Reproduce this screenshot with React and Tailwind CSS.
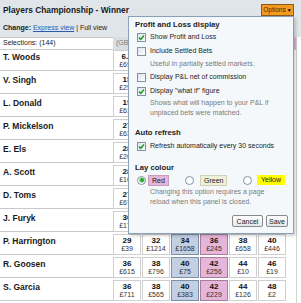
const runners = [
  { name: "T. Woods", cells: [["6.8", "£694"]] },
  { name: "V. Singh", cells: [["15", "£256"]] },
  { name: "L. Donald", cells: [["19", "£612"]] },
  { name: "P. Mickelson", cells: [["27", "£631"]] },
  { name: "E. Els", cells: [["28", "£204"]] },
  { name: "A. Scott", cells: [["28", "£160"]] },
  { name: "D. Toms", cells: [["27", "£672"]] },
  { name: "J. Furyk", cells: [["30", "£175"]] },
  { name: "P. Harrington", cells: [["29", "£39"], ["32", "£1214"], ["34", "£1658"], ["36", "£245"], ["38", "£658"], ["40", "£446"]] },
  { name: "R. Goosen", cells: [["36", "£615"], ["38", "£796"], ["40", "£75"], ["42", "£256"], ["44", "£10"], ["46", "£19"]] },
  { name: "S. Garcia", cells: [["36", "£711"], ["38", "£565"], ["40", "£383"], ["42", "£229"], ["44", "£126"], ["48", "£2"]] },
];

function Check({ on }) {
  return (
    <span className="flex h-[9px] w-[9px] shrink-0 items-center justify-center border border-[#7f93a8] bg-linear-to-br from-[#dfe4e9] to-white">
      {on && (
        <svg width="7" height="7" viewBox="0 0 7 7">
          <path d="M1 3.6 L2.8 5.3 L6 1.6" stroke="#1f9a1f" strokeWidth="1.5" fill="none" />
        </svg>
      )}
    </span>
  );
}

function Radio({ on }) {
  return (
    <span className="flex h-[9px] w-[9px] shrink-0 items-center justify-center rounded-full border border-[#7f93a8] bg-white">
      {on && <span className="h-[4px] w-[4px] rounded-full bg-[#2aa52a] ring-1 ring-[#a8dca8]" />}
    </span>
  );
}

function CheckRow({ on, children }) {
  return (
    <div className="flex h-[14px] items-center gap-[4px] pl-[2px]">
      <Check on={on} />
      <span>{children}</span>
    </div>
  );
}

function Cell({ price, amount, kind }) {
  const tone =
    kind === "back"
      ? "bg-[#c3cfe2] border-[#7e8fa8]"
      : kind === "lay"
      ? "bg-[#e6b5da] border-[#a77f9c]"
      : "bg-white border-[#cfcfcf]";
  return (
    <div className={`flex h-[21px] w-[28px] flex-col items-center border pt-[1px] ${tone}`}>
      <span className="text-[8px] font-bold leading-[9px] text-[#111]">{price}</span>
      <span className="text-[7px] leading-[8px] text-[#333]">{amount}</span>
    </div>
  );
}

export default function App() {
  return (
    <div className="relative h-[303px] w-[301px] overflow-hidden bg-white font-['Liberation_Sans',Arial,sans-serif] text-[#1a1a1a]">
      <div className="bg-[#e0e5e9]">
        <div className="flex h-[20px] items-center justify-between pl-[3px] pr-[7px]">
          <h1 className="text-[8.4px] font-bold leading-none">Players Championship - Winner</h1>
          <button className="flex h-[12px] w-[33px] items-center justify-center gap-[1px] border border-[#8a5a1a] bg-[#f29a22] text-[6.5px] leading-none text-[#4a2a00]">
            Options <span className="text-[5px] text-black">▼</span>
          </button>
        </div>
        <div className="flex h-[17px] items-center pl-[3px] text-[7px]">
          <b>Change:</b>&nbsp;<a className="text-[#2a5db0] underline">Express view</a>&nbsp;| Full view
        </div>
      </div>

      <div className="w-[297px] border-r border-[#d4d4d4]">
        <div className="flex h-[13px]">
          <div className="flex w-[113px] items-center border-y border-[#c4c9cd] bg-white pl-[3px] text-[7px]">
            Selections: (144)
          </div>
          <div className="flex flex-1 items-center justify-between bg-[#d9dee2] pl-[3px] text-[7px] text-[#7a8088]">
            <span>(GBP)</span>
            <span className="h-full w-[4px] bg-[#e2b6d6]" />
          </div>
        </div>

        {runners.map((r) => (
          <div key={r.name} className="flex h-[23px]">
            <div className="h-[21px] w-[113px] border-b border-[#c8c8c8] pl-[3px] pt-[2px] text-[8.5px] font-bold leading-[10px]">
              {r.name}
            </div>
            <div className="flex gap-[1px]">
              {[0, 1, 2, 3, 4, 5].map((i) => {
                const c = r.cells[i];
                return (
                  <Cell
                    key={i}
                    price={c ? c[0] : ""}
                    amount={c ? c[1] : ""}
                    kind={i === 2 ? "back" : i === 3 ? "lay" : "plain"}
                  />
                );
              })}
            </div>
          </div>
        ))}
      </div>

      <div className="absolute left-[128px] top-[16px] flex h-[218px] w-[166px] flex-col border border-[#8a9fb8] bg-[#f5f8fb] pl-[6px] pr-[5px] pt-[3px] text-[7px] leading-[10px] text-[#222] shadow-[2px_2px_3px_rgba(0,0,0,0.18)]">
        <div className="h-[10px] text-[7.7px] font-bold">Profit and Loss display</div>
        <CheckRow on>Show Profit and Loss</CheckRow>
        <CheckRow>Include Settled Bets</CheckRow>
        <div className="flex h-[12px] items-center pl-[15px] text-[#7a7a7a]">Useful in partially settled markets.</div>
        <CheckRow>Display P&amp;L net of commission</CheckRow>
        <CheckRow on>Display "what if" figure</CheckRow>
        <div className="pl-[15px] text-[#7a7a7a]">
          Shows what will happen to your P&amp;L if
          <br />
          unplaced bets were matched.
        </div>

        <div className="mt-[10px] h-[10px] text-[7.7px] font-bold">Auto refresh</div>
        <div className="mt-[1px]">
          <CheckRow on>Refresh automatically every 30 seconds</CheckRow>
        </div>

        <div className="mt-[10px] h-[10px] text-[7.7px] font-bold">Lay colour</div>
        <div className="mt-[1px] flex h-[12px] items-center pl-[2px]">
          <div className="flex w-[48px] items-center gap-[2px]">
            <Radio on />
            <span className="border border-[#c99bbd] bg-[#e6b5da] px-[3px] leading-[9px]">Red</span>
          </div>
          <div className="flex w-[58px] items-center gap-[6px]">
            <Radio />
            <span className="border border-[#cfd0b8] bg-[#eef0d8] px-[3px] leading-[9px]">Green</span>
          </div>
          <div className="flex items-center gap-[5px]">
            <Radio />
            <span className="bg-[#ffff00] px-[4px] leading-[10px]">Yellow</span>
          </div>
        </div>
        <div className="mt-[1px] pl-[15px] text-[#7a7a7a]">
          Changing this option requires a page
          <br />
          reload when this panel is closed.
        </div>
        <div className="mt-[8px] flex justify-end gap-[3px]">
          <button className="h-[12px] w-[31px] rounded-[2px] border border-[#8a8a8a] bg-linear-to-b from-white to-[#e6e6e6] text-[7px] leading-none">Cancel</button>
          <button className="h-[12px] w-[22px] rounded-[2px] border border-[#8a8a8a] bg-linear-to-b from-white to-[#e6e6e6] text-[7px] leading-none">Save</button>
        </div>
      </div>
    </div>
  );
}
